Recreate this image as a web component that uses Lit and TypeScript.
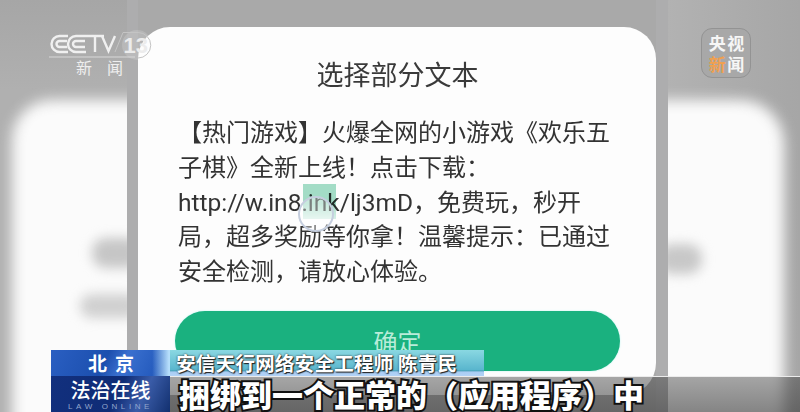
import { LitElement, html, css } from "lit";
import { customElement } from "lit/decorators.js";

@customElement("app-root")
export class AppRoot extends LitElement {
  static styles = css`
    :host { display: block; width: 800px; height: 412px; }
    .stage {
      position: relative; width: 800px; height: 412px; overflow: hidden;
      background: #a9a9a9; font-family: "Noto Sans CJK SC", sans-serif;
      display: grid; grid-template-columns: 127px 11px 518px 12px 132px;
    }
    .side { position: relative; overflow: hidden; }
    .strip { background: #adadae; }
    .ghost { height: 340px; background: #fbfbfb; filter: blur(7px); }
    .side.left { padding: 100px 0 0 12px; background: linear-gradient(#a6a6a6, #b0b0b0 90px); }
    .side.left .ghost { border-radius: 40px 0 0 0; margin-right: -30px; }
    .side.right { padding: 100px 16px 0 0; background: linear-gradient(90deg, #b2b2b2, #a6a6a6); }
    .side.right .ghost { border-radius: 0 44px 0 0; margin-left: -30px; }
    .blob { position: absolute; background: #c6c6c6; filter: blur(6px); border-radius: 14px; }
    .b1 { left: 92px; top: 238px; width: 50px; height: 30px; }
    .b2 { left: 80px; top: 294px; width: 60px; height: 24px; background: #d0d0d0; }
    .b3 { left: -10px; top: 244px; width: 44px; height: 30px; background: #c8c8c8; }

    .dialog {
      margin-top: 27px; height: 368px; background: #fdfdfd; border-radius: 32px;
      padding: 0 36px 0 37px; display: flex; flex-direction: column; box-sizing: border-box;
    }
    .title { height: 92px; display: flex; align-items: center; justify-content: center; font-size: 27px; color: #3a3a3a; filter: blur(.3px); }
    .msg { margin-top: -3px; padding-left: 3px; font-family: Roboto, "Noto Sans CJK SC", sans-serif; font-size: 24px; line-height: 34.8px; color: #333; white-space: nowrap; filter: blur(.3px); }
    .line { display: block; }
    .url { font-size: 24.5px; }
    .sel { position: relative; }
    .hl {
      position: absolute; left: 2px; top: -4px; width: 33px; height: 35px;
      background: linear-gradient(#a3dcc6 55%, #d7f0e7);
      mix-blend-mode: multiply;
    }
    .ripple {
      position: absolute; left: -3px; top: 8px; width: 32px; height: 32px; border-radius: 50%;
      border: 2px solid #c5cede; background: rgba(255,255,255,.4);
    }
    .ok {
      margin-top: 21px; height: 60px; width: 445px; border-radius: 30px; background: #1ab17f;
      box-shadow: 0 0 2px #b8f5f0; color: #b9ecd9; font-size: 24px;
      display: flex; align-items: center; justify-content: center;
    }

    .logo { position: absolute; left: 45px; top: 28px; width: 115px; height: 50px; }
    .logo text { font-family: "Liberation Sans", sans-serif; }
    .news { position: absolute; left: 76px; top: 58px; width: 47px; display: flex; justify-content: space-between; font-size: 16px; line-height: 19px; color: #eeeeee; white-space: nowrap; }
    .badge {
      position: absolute; left: 701px; top: 28px; width: 50px; height: 50px; box-sizing: border-box;
      border-radius: 11px; border: 1px solid #939393; background: #a8a8a8; color: #f6f6f6;
      display: grid; grid-template-columns: 1fr 1fr; place-items: center; padding: 3px 5px 3px 6px;
      font-size: 17px; line-height: 19px; font-weight: 700;
    }
    .badge .hot { color: #f0a050; }

    .ticker { position: absolute; left: 0; right: 0; top: 350px; height: 62px; display: grid; grid-template-columns: 51px 119px 1fr; grid-template-rows: 26px 36px; }
    .city {
      grid-column: 2; grid-row: 1; color: #fff; font-weight: 700; font-size: 19px; letter-spacing: 8px; padding-left: 37px; box-sizing: border-box;
      display: flex; align-items: center; white-space: nowrap; line-height: 26px;
      background: linear-gradient(90deg, transparent 85%, rgba(190,230,255,.95) 99%), linear-gradient(115deg, #2a5fc2, #1c4fae 45%, #3a70cf 60%, #1a50b4);
    }
    .speaker {
      grid-column: 3; grid-row: 1; width: 314px; box-sizing: border-box; padding-left: 6px;
      background: linear-gradient(#8ad8e2 0, #58b5cd 78%, #3f97ae 80%, #a9cdf4 84%, #b2d2f6);
      color: #fff; font-size: 19.75px; line-height: 26px; font-weight: 700; white-space: nowrap; overflow: hidden;
      text-shadow: 0 0 2px #222, 1px 1px 1px #222;
    }
    .brand {
      grid-column: 2; grid-row: 2; position: relative; color: #fff; text-align: center; overflow: hidden;
      background: linear-gradient(115deg, #12307e, #0f2c76 55%, #3a5ca8 75%, #12306f);
    }
    .brand b { display: block; font-size: 20px; line-height: 24px; font-weight: 500; margin-top: 2px; }
    .brand i { display: block; font-family: "Liberation Sans", sans-serif; font-style: normal; font-size: 8px; line-height: 9px; letter-spacing: 3.6px; color: #93a6cd; }
    .caption {
      grid-column: 3; grid-row: 2; box-sizing: border-box; border-top: 1px solid #ececec; padding-left: 9px; overflow: hidden;
      background: linear-gradient(rgba(60,60,60,.45), rgba(60,60,60,.62));
      font-size: 31px; line-height: 33px; font-weight: 900; color: #fff; white-space: nowrap;
      -webkit-text-stroke: 4px #111; paint-order: stroke fill;
    }
  `;

  render() {
    return html`
      <div class="stage">
        <div class="side left">
          <div class="ghost"></div>
          <div class="blob b1"></div>
          <div class="blob b2"></div>
        </div>
        <div class="strip"></div>
        <div class="dialog">
          <div class="title">选择部分文本</div>
          <div class="msg">
            <span class="line">【热门游戏】火爆全网的小游戏《欢乐五</span>
            <span class="line">子棋》全新上线！点击下载：</span>
            <span class="line"><span class="url">http://w.in8<span class="sel"><span class="hl"></span><span class="ripple"></span>.ink</span>/lj3mD</span>，免费玩，秒开</span>
            <span class="line">局，超多奖励等你拿！温馨提示：已通过</span>
            <span class="line">安全检测，请放心体验。</span>
          </div>
          <div class="ok">确定</div>
        </div>
        <div class="strip"></div>
        <div class="side right">
          <div class="ghost"></div>
          <div class="blob b3"></div>
        </div>

        <svg class="logo" viewBox="0 0 115 50" fill="none">
          <circle cx="92" cy="17" r="15" fill="rgba(255,255,255,.16)" />
          <path d="M70 24 L78 4.5 H93 A12.5 12.5 0 0 1 93 30" stroke="#c4c4c4" stroke-width="1" />
          <g stroke="#f0f0f0" stroke-width="2.4">
            <path d="M23 8 H14.5 A8 8 0 0 0 14.5 24 H23" />
            <path d="M22 13 H14.5 A3 3 0 0 0 14.5 19 H22" />
            <path d="M41 8 H31 A8 8 0 0 0 31 24 H41" />
            <path d="M40 13 H31 A3 3 0 0 0 31 19 H40" />
            <path d="M41 8 H59 M50 8 V24" />
            <path d="M57 8 L63.5 23 L70 8" />
          </g>
          <path d="M4 29 H90" stroke="#d8d8d8" stroke-width="1" />
          <text x="78.5" y="25" font-size="22" font-weight="700" fill="#ececec">13</text>
        </svg>
        <div class="news"><span>新</span><span>闻</span></div>

        <div class="badge"><span>央</span><span>视</span><span class="hot">新</span><span>闻</span></div>

        <div class="ticker">
          <div class="city">北京</div>
          <div class="speaker">安信天行网络安全工程师 陈青民</div>
          <div class="brand"><b>法治在线</b><i>LAW ONLINE</i></div>
          <div class="caption">捆绑到一个正常的（应用程序）中</div>
        </div>
      </div>
    `;
  }
}
